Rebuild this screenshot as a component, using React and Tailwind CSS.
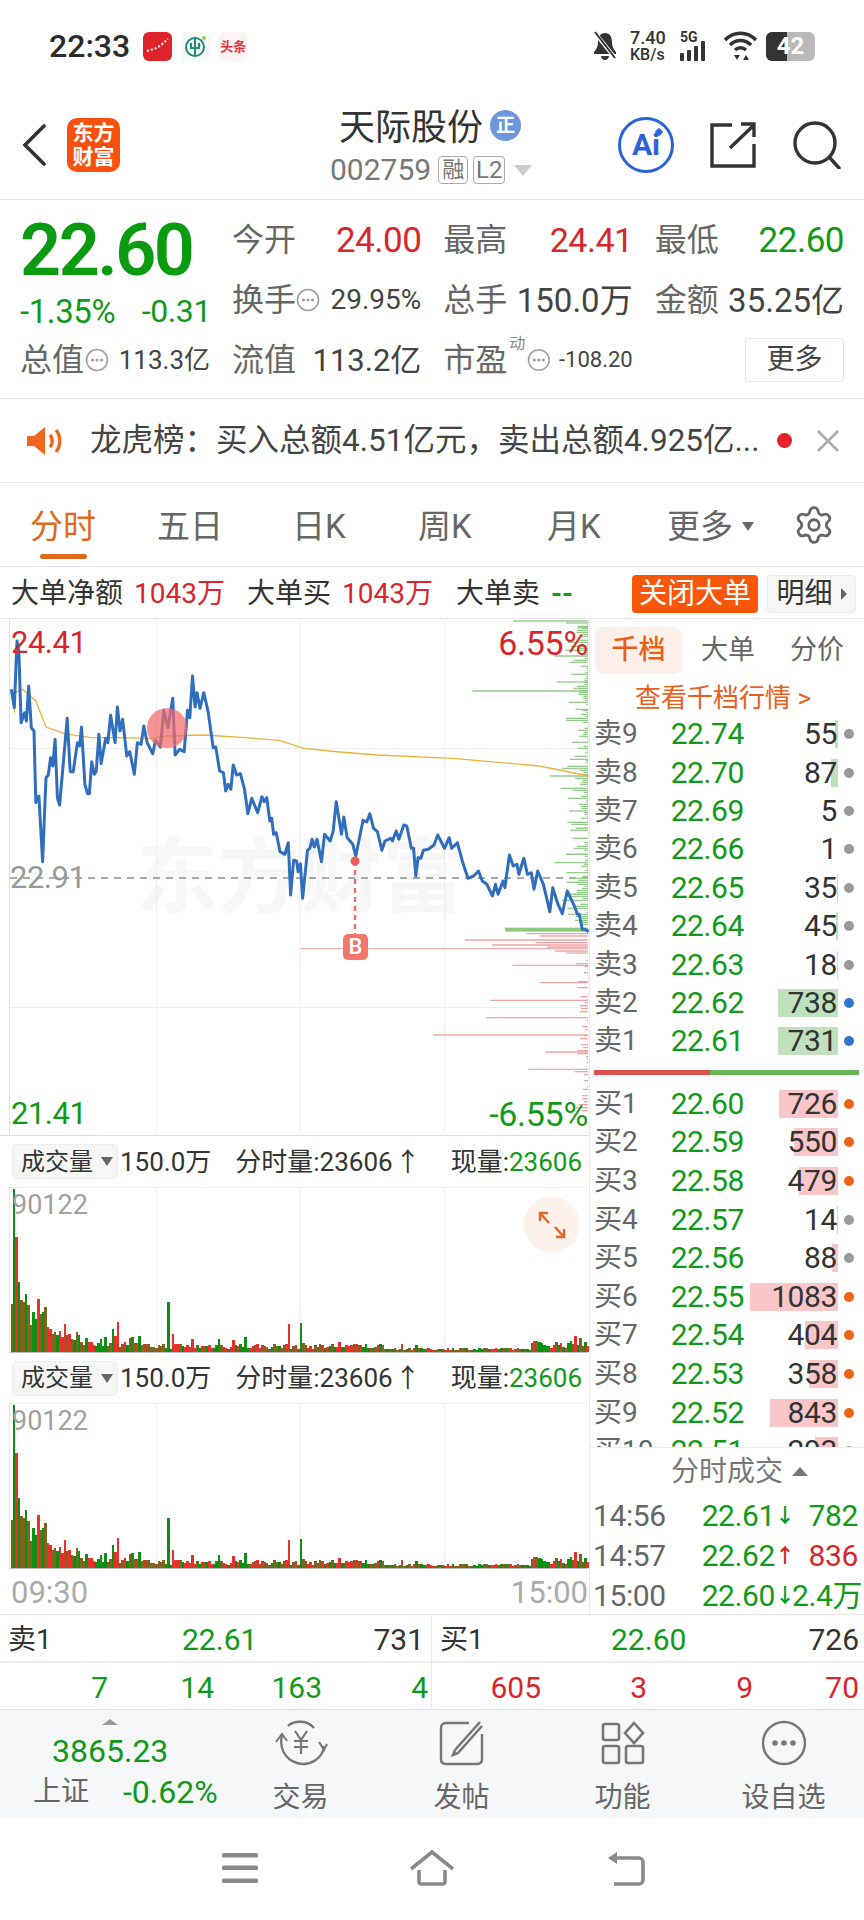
import React from 'react';
import { Settings } from 'lucide-react';

// simple seeded random so the charts stay the same on every render
let seed = 7;
const rnd = () => {
  seed = (seed * 16807) % 2147483647;
  return seed / 2147483647;
};

const linePts = [[30,205],[38,260],[45,60],[50,95],[56,305],[65,275],[70,300],[76,195],[83,320],[90,330],[95,545],[103,525],[113,722],[122,470],[128,462],[134,410],[140,435],[146,355],[152,530],[158,552],[178,292],[186,452],[194,452],[205,365],[211,375],[216,318],[225,490],[232,518],[237,518],[243,422],[250,460],[255,452],[262,340],[268,428],[280,352],[286,365],[293,283],[305,365],[311,258],[318,330],[325,295],[336,405],[344,392],[356,460],[364,365],[374,370],[381,315],[390,365],[405,398],[412,358],[425,378],[434,268],[445,320],[458,232],[464,402],[476,385],[488,392],[497,268],[503,290],[510,165],[517,258],[522,215],[530,262],[540,215],[552,275],[565,380],[572,378],[582,450],[592,455],[598,510],[605,490],[612,505],[618,432],[627,462],[637,458],[648,505],[657,578],[667,532],[683,575],[694,527],[700,542],[707,530],[715,600],[720,592],[725,640],[732,635],[742,692],[755,700],[764,665],[770,822],[778,718],[786,720],[790,752],[796,728],[802,832],[815,688],[821,682],[827,655],[833,678],[840,655],[852,722],[860,640],[875,660],[883,630],[891,542],[905,640],[911,588],[920,650],[935,670],[943,705],[962,598],[972,603],[980,578],[990,622],[1000,632],[1012,688],[1020,660],[1035,652],[1040,660],[1050,630],[1057,655],[1070,612],[1078,615],[1090,682],[1096,682],[1102,765],[1108,710],[1115,712],[1122,688],[1135,685],[1150,672],[1160,642],[1178,682],[1190,650],[1197,682],[1212,665],[1225,720],[1240,772],[1255,765],[1268,750],[1278,780],[1290,790],[1305,825],[1313,790],[1320,820],[1333,780],[1338,800],[1350,702],[1360,735],[1370,730],[1375,760],[1388,712],[1398,760],[1408,755],[1415,805],[1425,750],[1440,790],[1457,872],[1465,800],[1478,848],[1490,878],[1503,810],[1520,850],[1530,880],[1535,880],[1543,925],[1550,925],[1560,932]];
const avgPts = [[38,275],[40,215],[60,205],[95,240],[122,318],[170,338],[240,350],[300,350],[400,352],[440,345],[540,342],[650,350],[740,358],[805,382],[900,393],[1000,402],[1200,412],[1430,435],[1560,465]];

const px = (x) => x / 2.65;
const py = (y) => y / 3 + 2;
const toPath = (pts) => pts.map(([x, y]) => `${px(x).toFixed(1)},${py(y).toFixed(1)}`).join(' ');

const greenMajor = [[0,1360],[6,1500],[20,1530],[105,1470],[183,1475],[210,1252],[265,1525],[415,1510],[465,1458],[570,1508],[622,1530],[700,1500],[725,1468],[755,1500],[820,1510]];
const redMajor = [[938,1395],[945,1430],[957,1232],[965,1420],[972,1305],[978,1450],[990,1470],[996,1500],[1033,1358],[1085,1430],[1138,1300],[1190,1288],[1242,1148],[1293,1446],[1345,1400],[1405,1545]];

const profile = [];
for (let y = 4; y < 915; y += 6) profile.push([y, 1560 - rnd() * rnd() * 75, '#94cc8c']);
for (let y = 1010; y < 1470; y += 9) profile.push([y, 1560 - rnd() * rnd() * 45, '#eea4a6']);
greenMajor.forEach(([y, x]) => profile.push([y, x, '#94cc8c']));
redMajor.forEach(([y, x]) => profile.push([y, x, '#eea4a6']));

// volume bars, heights in zoomed pixels (3 per real pixel)
const GREEN = '#0f8f12';
const RED = '#e8312a';
const BROWN = '#80641e';
const head = [[145,BROWN],[490,GREEN],[345,RED],[210,GREEN],[155,BROWN],[150,BROWN],[175,GREEN],[140,BROWN],[80,BROWN],[120,GREEN],[100,GREEN],[160,RED],[115,BROWN],[120,GREEN],[135,BROWN],[75,RED],[70,RED],[55,BROWN],[60,BROWN],[50,GREEN],[62,RED],[45,RED],[85,RED],[50,BROWN],[55,RED],[40,BROWN],[35,GREEN],[60,BROWN],[50,GREEN],[30,BROWN]];
const spikes = { 42: [68, GREEN], 44: [90, RED], 65: [150, GREEN], 67: [55, RED], 75: [40, RED], 86: [40, GREEN], 92: [35, RED], 97: [45, GREEN], 115: [85, RED], 120: [88, GREEN], 136: [30, RED], 162: [25, RED], 168: [22, GREEN], 234: [48, RED], 238: [30, GREEN], 236: [42, BROWN], 240: [128, GREEN] };
const bars = [];
for (let i = 0; i < 241; i++) {
  if (i < head.length) { bars.push(head[i]); continue; }
  if (spikes[i]) { bars.push(spikes[i]); continue; }
  const x = i * 6.4;
  const env = x < 340 ? 42 : x < 1000 ? 20 : x < 1380 ? 9 : 28;
  const r = rnd();
  const color = r < 0.38 ? GREEN : r < 0.68 ? RED : BROWN;
  bars.push([env * (0.3 + rnd() * 0.85) + 3, color]);
}

const Grid = ({ lines = [] }) => (
  <>
    {[156.6, 300, 444.5].map((x) => <line key={x} x1={x} x2={x} y1="0" y2="517" stroke="#eeeeee" strokeWidth="1" />)}
    {lines.map((y) => <line key={y} x1="10" x2="588" y1={y} y2={y} stroke="#eeeeee" strokeWidth="1" />)}
  </>
);

const MainChart = () => (
  <div className="relative h-[517px] border-b border-[#dedede]">
    <div className="absolute left-[136px] top-[218px] text-[82px] leading-none font-bold text-[#f7f7f7] whitespace-nowrap">东方财富</div>
    <svg className="absolute inset-0" width="589" height="517">
      <line x1="9.5" x2="9.5" y1="0" y2="517" stroke="#dedede" />
      <Grid lines={[129.5, 388.5]} />
      <line x1="10" x2="588" y1="259" y2="259" stroke="#8f8f8f" strokeWidth="1.4" strokeDasharray="7 6" />
      {profile.map(([y, x, c], i) => <line key={i} x1={px(x)} x2="588" y1={py(y)} y2={py(y)} stroke={c} strokeWidth="1.3" />)}
      <rect x={px(1338)} y={py(920)} width={588 - px(1338)} height="4" fill="#8cc97f" />
      <line x1="300" x2="588" y1={py(983)} y2={py(983)} stroke="#eeb1b1" strokeWidth="1.4" />
      <polyline points={toPath(avgPts)} fill="none" stroke="#e9b33d" strokeWidth="1.3" />
      <polyline points={toPath(linePts)} fill="none" stroke="#2f6fbd" strokeWidth="3" strokeLinejoin="round" />
      <circle cx="167" cy="109" r="20" fill="#f26a6a" fillOpacity="0.72" />
      <line x1="355" x2="355" y1={py(720)} y2={py(940)} stroke="#ef6d66" strokeWidth="2.4" strokeDasharray="5 4" />
      <circle cx="355" cy={py(720)} r="4.5" fill="#f0605a" />
    </svg>
    <div className="absolute left-[343px] top-[315px] w-[25px] h-[26px] rounded-[5px] bg-[#f4756c] text-white text-[22px] font-medium leading-[26px] text-center">B</div>
    <span className="absolute left-[11px] top-[6px] text-[31px] tracking-[-0.5px] leading-[36px] text-[#d8262c]">24.41</span>
    <span className="absolute right-[1px] top-[6px] text-[34px] tracking-[-0.3px] leading-[36px] text-[#d8262c]">6.55%</span>
    <span className="absolute left-[10px] top-[241px] text-[31px] tracking-[-0.5px] leading-[36px] text-[#999999]">22.91</span>
    <span className="absolute left-[11px] bottom-[3px] text-[31px] tracking-[-0.5px] leading-[36px] text-[#109a18]">21.41</span>
    <span className="absolute right-[1px] bottom-[3px] text-[34px] tracking-[-0.3px] leading-[36px] text-[#109a18]">-6.55%</span>
  </div>
);

const VolumeHeader = ({ h }) => (
  <div className={`flex items-center pl-[12px] text-[26px] leading-none text-[#333333] whitespace-nowrap ${h}`}>
    <div className="flex items-center w-[106px] h-[35px] pl-[8px] rounded-[5px] bg-[#f6f6f6] border border-[#eeeeee] text-[24px]">
      <span>成交量</span>
      <span className="ml-[8px] w-0 h-0 border-x-[6px] border-x-transparent border-t-[9px] border-t-[#666666]"></span>
    </div>
    <span className="ml-[2px]">150.0万</span>
    <span className="ml-[24px]">分时量:23606</span>
    <span className="ml-[2px]">↑</span>
    <span className="ml-[auto]">现量:</span>
    <span className="mr-[7px] text-[#109a18]">23606</span>
  </div>
);

const VolumeChart = ({ expand }) => (
  <div className="relative h-[166px]">
    <svg className="absolute inset-0" width="589" height="166">
      <Grid />
      <line x1="10" x2="588" y1="0.5" y2="0.5" stroke="#f0f0f0" />
      <line x1="9.5" x2="9.5" y1="0" y2="166" stroke="#e4e4e4" />
      {bars.map(([h, c], i) => (
        <rect key={i} x={10.5 + i * 2.41} y={165 - h / 3} width="2.5" height={h / 3} fill={c} shapeRendering="crispEdges" />
      ))}
      <line x1="10" x2="588" y1="165.5" y2="165.5" stroke="#999999" strokeWidth="0.6" />
    </svg>
    <span className="absolute left-[12px] top-0 text-[27px] leading-[36px] text-[#a0a0a0]">90122</span>
    {expand && (
      <div className="absolute left-[524px] top-[10px] w-[55px] h-[55px] rounded-full bg-[#fdf1ea] flex items-center justify-center">
        <svg width="30" height="30" viewBox="0 0 30 30" fill="none" stroke="#e0672a" strokeWidth="2.4">
          <path d="M3 11V3h8M3 3l9 10M27 19v8h-8M27 27l-9-10" />
        </svg>
      </div>
    )}
  </div>
);

const sells = [['卖9','22.74','55',3,'g'],['卖8','22.70','87',7,'g'],['卖7','22.69','5',0,'g'],['卖6','22.66','1',0,'g'],['卖5','22.65','35',1,'g'],['卖4','22.64','45',2,'g'],['卖3','22.63','18',1,'g'],['卖2','22.62','738',60,'b'],['卖1','22.61','731',60,'b']];
const buys = [['买1','22.60','726',59,'o'],['买2','22.59','550',44,'o'],['买3','22.58','479',39,'o'],['买4','22.57','14',1,'g'],['买5','22.56','88',6,'g'],['买6','22.55','1083',88,'o'],['买7','22.54','404',33,'o'],['买8','22.53','358',29,'o'],['买9','22.52','843',68,'o'],['买10','22.51','293',23,'g']];
const dots = { g: 'bg-[#9a9a9a]', b: 'bg-[#2f75cc]', o: 'bg-[#ee6413]' };

const DepthRow = ({ row, h, bar }) => (
  <div className={`flex items-center pl-[4px] ${h}`}>
    <span className="w-[62px] text-[28px] leading-none text-[#666666] whitespace-nowrap">{row[0]}</span>
    <span className="w-[88px] text-right text-[30px] tracking-[-0.4px] leading-none text-[#109a18]">{row[1]}</span>
    <div className="relative w-[94px] h-[28px] text-right">
      <div className={`absolute right-0 top-0 h-full ${bar}`} style={{ width: row[3] }}></div>
      <span className="relative text-[30px] tracking-[-0.4px] leading-[28px] text-[#333333] pr-[1px]">{row[2]}</span>
    </div>
    <span className={`ml-[6px] w-[10px] h-[10px] rounded-full ${dots[row[4]]}`}></span>
  </div>
);

const DepthPanel = () => (
  <div className="w-[275px] border-l border-[#e8e8e8]">
    <div className="flex items-center h-[62px] pl-[5px] text-[27px] text-[#666666] leading-none">
      <div className="w-[87px] h-[47px] rounded-[8px] bg-[#fdf0e8] text-[#ea5f15] font-medium flex items-center justify-center">千档</div>
      <span className="ml-[19px]">大单</span>
      <span className="ml-[35px]">分价</span>
    </div>
    <div className="h-[34px] flex items-center pl-[45px] text-[26px] leading-none text-[#e8611c] whitespace-nowrap">查看千档行情 &gt;</div>
    {sells.map((r) => <DepthRow key={r[0]} row={r} h="h-[38.4px]" bar="bg-[#bfe2bd]" />)}
    <div className="flex h-[5px] mt-[9px] mb-[10px] ml-[4px] mr-[5px]">
      <div className="w-[116px] bg-[#dd4f4f]"></div>
      <div className="flex-1 bg-[#68b552]"></div>
    </div>
    <div className="h-[363px] overflow-hidden border-b border-[#eeeeee]">
      {buys.map((r) => <DepthRow key={r[0]} row={r} h="h-[38.6px]" bar="bg-[#fac6c7]" />)}
    </div>
    <div className="flex items-center h-[48px] pl-[81px] text-[28px] leading-none text-[#777777]">
      <span>分时成交</span>
      <span className="ml-[9px] w-0 h-0 border-x-[8px] border-x-transparent border-b-[9px] border-b-[#777777]"></span>
    </div>
    {[['14:56','22.61','↓','782','text-[#109a18]'],['14:57','22.62','↑','836','text-[#d8262c]'],['15:00','22.60','↓','2.4万','text-[#109a18]']].map((r) => (
      <div key={r[0]} className="flex items-center h-[40px] pl-[3px] pr-[6px] text-[30px] tracking-[-0.4px] leading-none whitespace-nowrap">
        <span className="text-[#666666]">{r[0]}</span>
        <span className="ml-auto text-[#109a18]">{r[1]}</span>
        <span className={`w-[17px] text-[20px] text-center font-bold ${r[4]}`}>{r[2]}</span>
        <span className={`w-[66px] text-right ${r[4]}`}>{r[3]}</span>
      </div>
    ))}
  </div>
);

const QuoteCell = ({ label, value, cls, icon, vcls = 'text-[33px]' }) => (
  <div className="flex items-center justify-between h-[60px] whitespace-nowrap">
    <span className="flex items-center text-[32px] leading-none text-[#666666]">{label}{icon}</span>
    <span className={`leading-none ${vcls} ${cls}`}>{value}</span>
  </div>
);

const Dots = ({ c = '' }) => (
  <svg className={c} width="24" height="24" viewBox="0 0 24 24" fill="none" stroke="#a0a0a0" strokeWidth="1.6">
    <circle cx="12" cy="12" r="10.5" />
    <circle cx="7.5" cy="12" r="0.8" fill="#a0a0a0" />
    <circle cx="12" cy="12" r="0.8" fill="#a0a0a0" />
    <circle cx="16.5" cy="12" r="0.8" fill="#a0a0a0" />
  </svg>
);

const tabs = [['分时', 'w-[157px] pl-[30px]'], ['五日', 'w-[135px]'], ['日K', 'w-[126px]'], ['周K', 'w-[129px]'], ['月K', 'w-[120px]']];

const BigOrder = ({ label, value, cls, c }) => (
  <>
    <span className={`text-[#333333] ${c}`}>{label}</span>
    <span className={`ml-[11px] ${cls}`}>{value}</span>
  </>
);

const NavItem = ({ label, children }) => (
  <div className="w-[161px] flex flex-col items-center pt-[10px]">
    <div className="h-[46px] flex items-center justify-center">{children}</div>
    <span className="mt-[18px] text-[28px] leading-[28px] text-[#666666]">{label}</span>
  </div>
);

export default function App() {
  return (
    <div className="w-[864px] h-[1920px] bg-white overflow-hidden font-['Roboto','Noto_Sans_CJK_SC',sans-serif]">
      {/* status bar */}
      <div className="flex items-center h-[90px] pt-[2px] pl-[49px] pr-[49px]">
        <span className="text-[32px] font-medium leading-none text-[#2b2b2b]">22:33</span>
        <div className="ml-[13px] w-[29px] h-[29px] rounded-[6px] bg-[#e0242b] flex items-center justify-center">
          <svg width="24" height="18" viewBox="0 0 24 18" fill="none" stroke="#fff" strokeWidth="2" strokeDasharray="2 2"><path d="M1 14l7-2 6-3 8-7" /></svg>
        </div>
        <div className="ml-[10px] w-[28px] h-[29px] rounded-[6px] bg-[#f5f8f5] flex items-center justify-center">
          <svg width="24" height="24" viewBox="0 0 24 24" fill="none" stroke="#1e8f73" strokeWidth="2"><circle cx="11" cy="13" r="9" /><path d="M11 5v16M7 9v5h8V9" /><circle cx="20" cy="4" r="2" fill="#8fcf4f" stroke="none" /></svg>
        </div>
        <div className="ml-[9px] w-[28px] h-[29px] rounded-[6px] bg-[#fdf3f3] text-[#e5323a] text-[13px] font-bold leading-none flex items-center justify-center whitespace-nowrap">头条</div>
        <div className="ml-auto flex items-center">
          <svg width="26" height="30" viewBox="0 0 26 30" fill="#333333">
            <path d="M13 2c-5 0-7 4-7 9 0 5-2 8-4 10v2h22v-2c-2-2-4-5-4-10 0-5-2-9-7-9zM9 25h8c0 2-2 4-4 4s-4-2-4-4z" />
            <path d="M3 2l20 25" stroke="#fff" strokeWidth="4" />
            <path d="M3 1l20 26" stroke="#333333" strokeWidth="2" />
          </svg>
          <div className="ml-[12px] w-[36px] text-[#333333] font-medium leading-[17px] whitespace-nowrap">
            <div className="text-[18px]">7.40</div>
            <div className="text-[16px]">KB/s</div>
          </div>
          <div className="ml-[14px] w-[34px] h-[30px] relative">
            <span className="absolute left-0 -top-[1px] text-[14px] font-bold leading-none text-[#333333]">5G</span>
            <div className="absolute left-0 bottom-0 flex items-end gap-[3px]">
              <i className="block w-[4px] h-[8px] bg-[#333333] rounded-[1px]"></i>
              <i className="block w-[4px] h-[11px] bg-[#333333] rounded-[1px]"></i>
              <i className="block w-[4px] h-[15px] bg-[#333333] rounded-[1px]"></i>
              <i className="block w-[4px] h-[20px] bg-[#333333] rounded-[1px]"></i>
            </div>
          </div>
          <svg className="ml-[9px]" width="35" height="30" viewBox="0 0 35 30" fill="none" stroke="#333333" strokeWidth="3.4">
            <path d="M2 9c9-9 22-9 31 0M7 14c6-6 15-6 21 0M12 19c3-3 8-3 11 0" />
            <path d="M11 24h6l-3 5zM20 29h6l-3-5z" fill="#333333" stroke="none" />
          </svg>
          <div className="relative ml-[8px] w-[49px] h-[29px] rounded-[6px] bg-[#b9b9b9] overflow-hidden">
            <div className="w-[21px] h-full bg-[#333333]"></div>
            <span className="absolute inset-0 flex items-center justify-center text-white text-[24px] font-bold leading-none">42</span>
          </div>
        </div>
      </div>

      {/* header */}
      <div className="flex items-center h-[110px] border-b border-[#e4e4e4]">
        <div className="flex items-center w-[330px] pl-[22px]">
          <svg width="24" height="42" viewBox="0 0 24 42" fill="none" stroke="#333333" strokeWidth="3.6" strokeLinecap="round"><path d="M22 2L3 21l19 19" /></svg>
          <div className="ml-[21px] w-[53px] h-[54px] rounded-[10px] bg-[#f9500f] text-white text-[21px] font-bold leading-[24px] flex flex-col items-center justify-center">
            <span>东方</span><span>财富</span>
          </div>
        </div>
        <div className="w-[288px] flex flex-col items-start">
          <div className="flex items-center pl-[9px] h-[50px]">
            <span className="text-[36px] leading-none text-[#333333] whitespace-nowrap">天际股份</span>
            <span className="ml-[7px] -mt-[5px] w-[31px] h-[31px] rounded-full bg-[#6d96de] text-white text-[19px] font-bold leading-none flex items-center justify-center">正</span>
          </div>
          <div className="flex items-center h-[32px] mt-[1px]">
            <span className="text-[30px] leading-none text-[#777777]">002759</span>
            <span className="ml-[7px] w-[30px] h-[28px] rounded-[4px] border border-[#aaaaaa] text-[#777777] text-[22px] leading-none flex items-center justify-center">融</span>
            <span className="ml-[5px] w-[32px] h-[28px] rounded-[4px] border border-[#aaaaaa] text-[#777777] text-[24px] leading-none flex items-center justify-center">L2</span>
            <span className="ml-[9px] w-0 h-0 border-x-[9px] border-x-transparent border-t-[11px] border-t-[#cccccc]"></span>
          </div>
        </div>
        <div className="flex items-center">
          <div className="relative w-[56px] h-[56px] rounded-full border-[3px] border-[#2a62d8] text-[#2a62d8] text-[30px] font-bold leading-none flex items-center justify-center">
            Ai
            <span className="absolute right-[9px] top-[9px] w-[6px] h-[6px] rotate-45 bg-[#2a62d8]"></span>
          </div>
          <svg className="ml-[36px]" width="46" height="46" viewBox="0 0 46 46" fill="none" stroke="#333333" strokeWidth="3.4">
            <path d="M22 3H2v41h42V22M20 26L44 3M31 2h13v13" />
          </svg>
          <svg className="ml-[37px]" width="48" height="48" viewBox="0 0 48 48" fill="none" stroke="#333333" strokeWidth="3.4" strokeLinecap="round">
            <circle cx="22" cy="22" r="20" /><path d="M37 37l9 10" />
          </svg>
        </div>
      </div>

      {/* quote */}
      <div className="flex h-[199px] pt-[10px] border-b border-[#e8e8e8]">
        <div className="w-[232px] pl-[20px]">
          <div className="h-[81px] flex items-center text-[72px] tracking-[-2.5px] font-semibold leading-none text-[#0a9b10]">22.60</div>
          <div className="h-[40px] w-[191px] flex items-center justify-between leading-none text-[#109a18]">
            <span className="text-[33px] tracking-[-0.4px]">-1.35%</span><span className="text-[32px] tracking-[-0.4px]">-0.31</span>
          </div>
          <div className="h-[58px] w-[190px] flex items-center justify-between whitespace-nowrap">
            <span className="flex items-center text-[32px] leading-none text-[#666666]">总值<Dots c="ml-[1px]" /></span>
            <span className="text-[26px] leading-none text-[#444444]">113.3亿</span>
          </div>
        </div>
        <div className="w-[612px] grid grid-cols-3 gap-x-[22px] content-start">
          <QuoteCell label="今开" value="24.00" cls="text-[#d8262c]" vcls="text-[35px] tracking-[-0.5px]" />
          <QuoteCell label="最高" value="24.41" cls="text-[#d8262c]" vcls="text-[34px] tracking-[-0.5px]" />
          <QuoteCell label="最低" value="22.60" cls="text-[#109a18]" vcls="text-[35px] tracking-[-0.5px]" />
          <QuoteCell label="换手" value="29.95%" cls="text-[#444444]" vcls="text-[28px]" icon={<Dots c="ml-[0px]" />} />
          <QuoteCell label="总手" value="150.0万" cls="text-[#444444]" />
          <QuoteCell label="金额" value="35.25亿" cls="text-[#444444]" />
          <QuoteCell label="流值" value="113.2亿" cls="text-[#444444]" vcls="text-[31px]" />
          <div className="flex items-center h-[60px] whitespace-nowrap">
            <span className="text-[32px] leading-none text-[#666666]">市盈</span>
            <span className="self-start mt-[6px] ml-[2px] text-[16px] leading-none text-[#888888]">动</span>
            <Dots c="ml-[2px]" />
            <span className="ml-[8px] text-[22px] leading-none text-[#444444]">-108.20</span>
          </div>
          <div className="flex items-center justify-end h-[60px]">
            <div className="w-[99px] h-[44px] rounded-[4px] border border-[#e4e4e4] text-[28px] leading-none text-[#444444] flex items-center justify-center">更多</div>
          </div>
        </div>
      </div>

      {/* notice */}
      <div className="flex items-center h-[84px] pl-[27px] border-b border-[#e8e8e8]">
        <svg width="36" height="30" viewBox="0 0 36 30" fill="none">
          <path d="M0 10h7l11-9v28L7 20H0z" fill="#f2661c" />
          <path d="M23 9c3 3 3 9 0 12M29 4c5 6 5 16 0 22" stroke="#f2661c" strokeWidth="3.4" />
        </svg>
        <span className="ml-[27px] w-[687px] text-[31.5px] leading-none text-[#444444] whitespace-nowrap">龙虎榜：买入总额4.51亿元，卖出总额4.925亿...</span>
        <span className="w-[15px] h-[15px] rounded-full bg-[#e5202a]"></span>
        <svg className="ml-[24px]" width="24" height="24" viewBox="0 0 24 24" stroke="#aaaaaa" strokeWidth="2.6"><path d="M2 2l20 20M22 2L2 22" /></svg>
      </div>

      {/* period tabs */}
      <div className="flex items-center h-[84px] pt-[4px] border-b border-[#e4e4e4] text-[33px] leading-none text-[#666666]">
        {tabs.map(([t, w], i) => (
          <div key={t} className={`relative flex items-center h-full whitespace-nowrap ${w} ${i === 0 ? 'text-[#dd6a1e]' : ''}`}>
            <span>{t}</span>
            {i === 0 && <span className="absolute left-[40px] bottom-[7px] w-[47px] h-[5px] rounded-full bg-[#dd6a1e]"></span>}
          </div>
        ))}
        <div className="flex items-center whitespace-nowrap">
          <span>更多</span>
          <span className="ml-[9px] w-0 h-0 border-x-[6px] border-x-transparent border-t-[9px] border-t-[#666666]"></span>
        </div>
        <Settings className="ml-[39px] -mt-[3px] text-[#666666]" size={42} strokeWidth={1.6} />
      </div>

      {/* big order row */}
      <div className="flex items-center h-[51px] pt-[2px] pl-[11px] text-[28px] leading-none whitespace-nowrap">
        <BigOrder label="大单净额" value="1043万" cls="text-[#d8262c]" />
        <BigOrder label="大单买" value="1043万" cls="text-[#d8262c]" c="ml-[22px]" />
        <BigOrder label="大单卖" value="--" cls="text-[#109a18] font-bold" c="ml-[23px]" />
        <div className="ml-auto w-[126px] h-[38px] rounded-[4px] bg-[#f9560a] text-white flex items-center justify-center">关闭大单</div>
        <div className="ml-[9px] mr-[8px] w-[89px] h-[38px] rounded-[4px] bg-[#f6f6f6] border border-[#ebebeb] text-[#333333] flex items-center justify-center">
          明细
          <span className="ml-[8px] w-0 h-0 border-y-[6px] border-y-transparent border-l-[6px] border-l-[#666666]"></span>
        </div>
      </div>

      {/* chart + depth */}
      <div className="flex h-[997px] border-t border-b border-[#e6e6e6]">
        <div className="w-[589px]">
          <MainChart />
          <VolumeHeader h="h-[51px]" />
          <VolumeChart expand />
          <VolumeHeader h="h-[50px]" />
          <VolumeChart />
          <div className="flex items-center justify-between h-[47px] pl-[11px] pr-[1px] text-[31px] leading-none text-[#aaaaaa]">
            <span>09:30</span><span>15:00</span>
          </div>
        </div>
        <DepthPanel />
      </div>

      {/* best bid and ask */}
      <div className="flex h-[95px] border-b border-[#dedede] text-[30px] leading-none whitespace-nowrap">
        <div className="w-[432px] border-r border-[#e8e8e8]">
          <div className="flex items-center h-[48px] pt-[3px] pl-[8px] pr-[7px] border-b-2 border-[#eeeeee] text-[#333333]">
            <span className="w-[174px] text-[28px]">卖1</span>
            <span className="text-[#109a18]">22.61</span>
            <span className="ml-auto">731</span>
          </div>
          <div className="flex items-center justify-end h-[46px] pt-[3px] pr-[3px] text-[#109a18]">
            <span className="w-[106px] text-right">7</span><span className="w-[106px] text-right">14</span>
            <span className="w-[108px] text-right">163</span><span className="w-[106px] text-right">4</span>
          </div>
        </div>
        <div className="flex-1">
          <div className="flex items-center h-[48px] pt-[3px] pl-[8px] pr-[5px] border-b-2 border-[#eeeeee] text-[#333333]">
            <span className="w-[171px] text-[28px]">买1</span>
            <span className="text-[#109a18]">22.60</span>
            <span className="ml-auto">726</span>
          </div>
          <div className="flex items-center justify-end h-[46px] pt-[3px] pr-[5px] text-[#d8262c]">
            <span className="w-[106px] text-right">605</span><span className="w-[106px] text-right">3</span>
            <span className="w-[106px] text-right">9</span><span className="w-[106px] text-right">70</span>
          </div>
        </div>
      </div>

      {/* bottom toolbar */}
      <div className="flex h-[108px] bg-[#f6f7f9]">
        <div className="w-[220px] pl-[33px] whitespace-nowrap">
          <div className="h-[18px] pt-[9px] pl-[69px]">
            <div className="w-0 h-0 border-x-[8px] border-x-transparent border-b-[6px] border-b-[#999999]"></div>
          </div>
          <div className="h-[46px] pl-[19px] flex items-center text-[32px] leading-none text-[#109a18]">3865.23</div>
          <div className="h-[34px] mt-[1px] flex items-center leading-none">
            <span className="text-[28px] text-[#666666]">上证</span>
            <span className="ml-[34px] text-[32px] text-[#109a18]">-0.62%</span>
          </div>
        </div>
        <NavItem label="交易">
          <svg width="54" height="46" viewBox="0 0 54 46" fill="none" stroke="#777777" strokeWidth="2.4">
            <path d="M14 6C20 0 34 0 40 8M50 26c-1 12-14 21-27 17C10 39 5 27 8 15" />
            <path d="M2 22l6-8 5 7M45 22l5 8 3-6" strokeWidth="2" />
            <path d="M21 11l6 9 6-9M27 20v14M20 21h14M20 27h14" strokeWidth="2.2" />
          </svg>
        </NavItem>
        <NavItem label="发帖">
          <svg width="46" height="46" viewBox="0 0 46 46" fill="none" stroke="#777777" strokeWidth="2.4">
            <path d="M30 3H7C4 3 2 5 2 8v31c0 3 2 5 5 5h31c3 0 5-2 5-5V14" />
            <path d="M16 30L41 2M16 30l-2 5 5-2 24-27" strokeWidth="2.6" />
          </svg>
        </NavItem>
        <NavItem label="功能">
          <svg width="44" height="44" viewBox="0 0 44 44" fill="none" stroke="#777777" strokeWidth="2.6">
            <rect x="2" y="3" width="16" height="16" rx="2" />
            <path d="M33 2l9 10-9 10-9-10z" />
            <rect x="2" y="25" width="16" height="17" rx="2" />
            <rect x="25" y="25" width="17" height="17" rx="2" />
          </svg>
        </NavItem>
        <NavItem label="设自选">
          <svg width="46" height="46" viewBox="0 0 46 46" fill="none" stroke="#777777" strokeWidth="2.4">
            <circle cx="23" cy="23" r="21" />
            <circle cx="14" cy="23" r="1.6" fill="#777777" />
            <circle cx="23" cy="23" r="1.6" fill="#777777" />
            <circle cx="32" cy="23" r="1.6" fill="#777777" />
          </svg>
        </NavItem>
      </div>

      {/* android nav */}
      <div className="flex items-center h-[102px] pb-[2px]">
        <svg className="ml-[222px]" width="36" height="30" viewBox="0 0 36 30" fill="#8a8a8a">
          <rect x="0" y="0" width="36" height="4.5" rx="1.5" /><rect x="0" y="12.5" width="36" height="4.5" rx="1.5" /><rect x="0" y="25.5" width="36" height="4.5" rx="1.5" />
        </svg>
        <svg className="ml-[151px]" width="46" height="36" viewBox="0 0 46 36" fill="none" stroke="#8a8a8a" strokeWidth="3.6">
          <path d="M2 19L23 2l21 17" /><path d="M10 20v12c0 1 1 2 2 2h22c1 0 2-1 2-2V20" />
        </svg>
        <svg className="ml-[150px]" width="40" height="36" viewBox="0 0 40 36" fill="none" stroke="#8a8a8a" strokeWidth="3.6">
          <path d="M12 8h22c2 0 4 2 4 4v18c0 2-2 4-4 4H9" /><path d="M12 2L3 8l9 6z" fill="#8a8a8a" stroke="none" />
        </svg>
      </div>
    </div>
  );
}
